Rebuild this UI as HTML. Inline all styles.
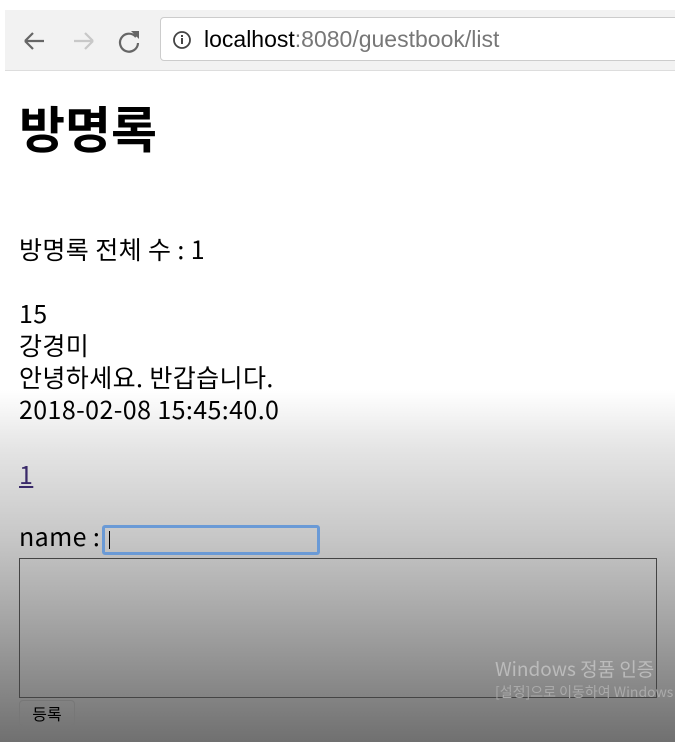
<!DOCTYPE html>
<html><head><meta charset="utf-8"><style>
body{margin:0;width:675px;height:742px;overflow:hidden;position:relative;font-family:"Liberation Sans","Noto Sans CJK KR",sans-serif;
background:linear-gradient(to bottom,#fff 0,#fff 390px,#e4e4e4 450px,#c6c6c6 540px,#a5a5a5 620px,#707070 742px);}
.bar{position:absolute;left:5px;top:10px;width:670px;height:60px;background:#f2f2f2;border-bottom:1px solid #ddd}
.addr{position:absolute;left:160px;top:17px;width:520px;height:44px;background:#fff;border:1px solid #ccc;border-radius:4px;box-sizing:border-box}
.t{position:absolute;left:19px;color:#000;font-size:25px;letter-spacing:0.4px;white-space:nowrap;line-height:1;font-family:"Noto Sans CJK KR",sans-serif}
</style></head><body>
<div class="bar"></div>
<svg style="position:absolute;left:22px;top:28px" width="120" height="26" viewBox="0 0 120 26">
<path d="M3 13H22M3 13L11 5M3 13L11 21" stroke="#666" stroke-width="2.2" fill="none"/>
<path d="M71 13H52M71 13L63 5M71 13L63 21" stroke="#c8c8c8" stroke-width="2.2" fill="none"/>
<path d="M114 9A9 9 0 1 0 116 15" stroke="#666" stroke-width="2.2" fill="none"/>
<path d="M109 3L117 3L117 11Z" fill="#666"/>
</svg>
<div class="addr"></div>
<svg style="position:absolute;left:172px;top:30px" width="20" height="20"><circle cx="10" cy="10" r="8" stroke="#444" stroke-width="1.8" fill="none"/><rect x="9" y="8" width="2" height="6" fill="#444"/><rect x="9" y="5" width="2" height="2" fill="#444"/></svg>
<div style="position:absolute;left:204px;top:28px;font-size:23px;color:#000;line-height:1;white-space:nowrap">localhost<span style="color:#777">:8080/guestbook/list</span></div>
<div class="t" style="top:102px;font-size:50px;font-weight:bold;letter-spacing:0">방명록</div>
<div class="t" style="top:237px">방명록 전체 수 : 1</div>
<div class="t" style="top:301px">15</div>
<div class="t" style="top:333px">강경미</div>
<div class="t" style="top:365px">안녕하세요. 반갑습니다.</div>
<div class="t" style="top:397px">2018-02-08 15:45:40.0</div>
<div class="t" style="top:462px;color:#3a2a6a;text-decoration:underline">1</div>
<div class="t" style="top:524px">name :</div>
<div style="position:absolute;left:102px;top:525px;width:218px;height:30px;border:3px solid #6a9ad6;border-radius:3px;box-sizing:border-box"></div>
<div style="position:absolute;left:109px;top:531px;width:1px;height:18px;background:#000"></div>
<div style="position:absolute;left:19px;top:558px;width:638px;height:140px;border:1px solid #444;box-sizing:border-box"></div>
<div style="position:absolute;left:19px;top:700px;width:56px;height:26px;border:1px solid #777;border-radius:4px;box-sizing:border-box;font-size:16px;text-align:center;line-height:24px;font-family:'Noto Sans CJK KR',sans-serif">등록</div>
<div style="position:absolute;left:495px;top:657px;font-size:19px;color:#bbb;white-space:nowrap;font-family:'Noto Sans CJK KR',sans-serif;line-height:24px">Windows 정품 인증</div>
<div style="position:absolute;left:495px;top:683px;font-size:14px;color:#aaa;white-space:nowrap;font-family:'Noto Sans CJK KR',sans-serif;line-height:18px">[설정]으로 이동하여 Windows</div>
</body></html>
